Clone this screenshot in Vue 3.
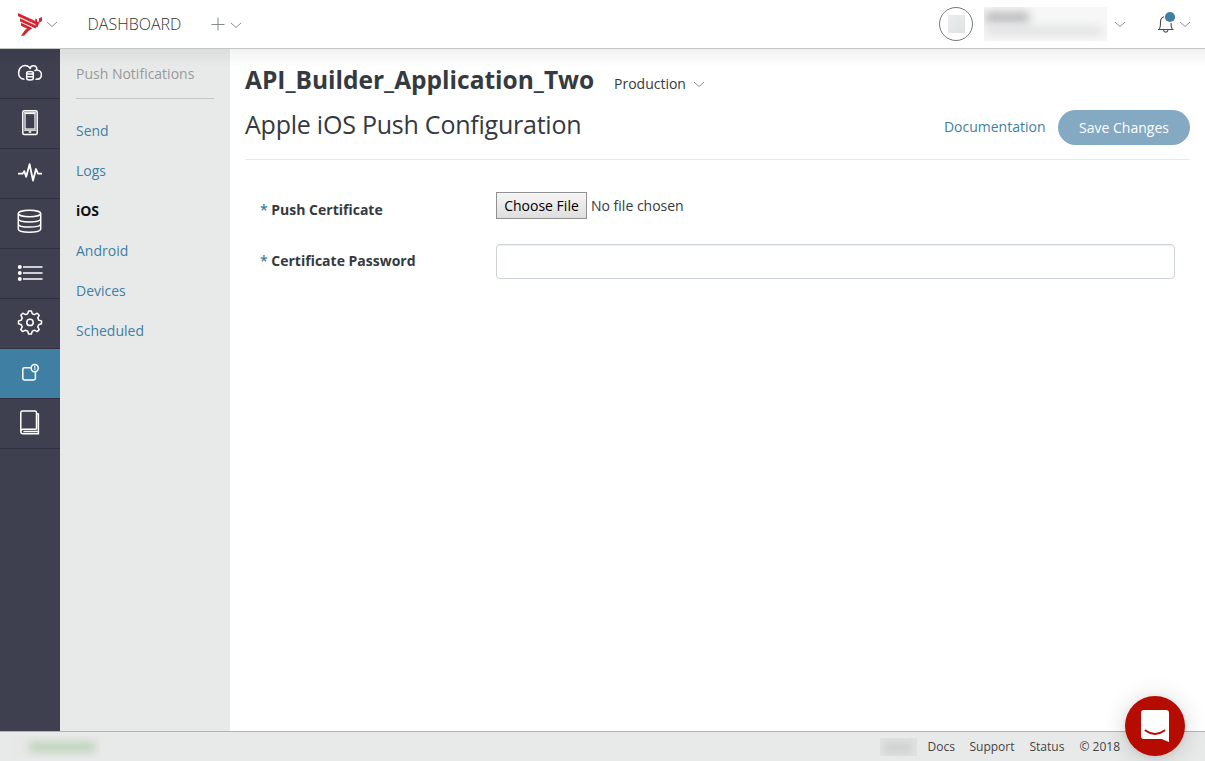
<script setup>
import { ref } from 'vue'

const rail = ['cloud', 'phone', 'pulse', 'database', 'list', 'gear', 'push', 'book']
const activeRail = 'push'
const links = ['Send', 'Logs', 'iOS', 'Android', 'Devices', 'Scheduled']
const activeLink = 'iOS'
const password = ref('')
</script>

<template>
  <div class="page">
    <header class="topbar">
      <svg class="logo" viewBox="0 0 26 24">
        <path d="M1 0 L18.300 8.100 V5.600 L20 6.300 V9.200 L22 8.200 V5.200 L25 4 V8.300 L22.200 9.600 L20.600 13.900 L17.500 13.500 L9.500 9.800 L18 12.200 L18.500 11.200 L1 3.200 Z" fill="#d8242f" />
        <path d="M3 4.900 L20 12.600 L18.500 15.600 L3 8.400 Z" fill="#d8242f" />
        <path d="M4 9.500 L15.500 15 L11.500 18 L7 22.800 L4 22.800 L8.200 16.700 L10.200 15.800 L4 12.800 Z" fill="#d8242f" />
        <path d="M1 4 L18.500 12.100 M3 8.900 L15.500 14.600" stroke="#fff" stroke-width=".7" fill="none" />
      </svg>
      <svg class="chev c1" viewBox="0 0 12 7"><path d="M1 1l5 4.500L11 1" /></svg>
      <span class="brand">DASHBOARD</span>
      <svg class="plus" viewBox="0 0 14 14"><path d="M7 .5v13M.5 7.500h13" /></svg>
      <svg class="chev c2" viewBox="0 0 12 7"><path d="M1 1l5 4.500L11 1" /></svg>
      <div class="avatar"><i></i></div>
      <div class="user"><i class="smear s1"></i><i class="smear s2"></i></div>
      <svg class="chev c3" viewBox="0 0 12 7"><path d="M1 1l5 4.500L11 1" /></svg>
      <svg class="bell" viewBox="0 0 18 22">
        <path d="M1 16.500h15.500M2.200 16c1.400-1.600 1.300-4 1.300-7 0-3 1.500-4.700 3.500-5.200M15.300 16c-1.300-1.500-1.300-3.500-1.300-6M6.500 17c.3 2.800 4.200 2.800 4.500 0" />
        <circle cx="13" cy="4" r="5.100" />
      </svg>
      <svg class="chev c4" viewBox="0 0 12 7"><path d="M1 1l5 4.500L11 1" /></svg>
    </header>

    <div class="body">
      <nav class="rail">
        <a v-for="name in rail" :key="name" class="rail-item" :class="{ active: name === activeRail }">
          <svg v-if="name === 'cloud'" viewBox="0 0 60 49">
            <path d="M24.500 30.700C21 30.700 18.600 28 18.600 24.500c0-4 2.600-7.500 6.400-7.500 2.600 0 4.400 1.300 5.600 3.300M29.800 20.500c.5-2.300 2.300-3.500 4.200-3.200 2 .3 3 2 2.700 4.200M34.500 22.500c1-1 2.500-1.300 3.800-.6 2 .7 3.200 2.500 3.100 4.500-.1 2.600-1.800 4.300-4.400 4.300h-1.500" />
            <path d="M26.700 24.500c0-2 6.600-2 6.600 0v5.500c0 2-6.600 2-6.600 0zM27 25.600h6M27 28.300h6" />
          </svg>
          <svg v-else-if="name === 'phone'" viewBox="0 0 60 49">
            <rect x="22.800" y="12.300" width="14.400" height="23.700" rx="1.500" />
            <rect x="25" y="15" width="10" height="15.500" stroke-width="1.200" />
            <path d="M24 13.800h12M24 31.800h12" stroke-width="1" /><path d="M28.700 33.500h2.600" stroke-width="1.600" />
          </svg>
          <svg v-else-if="name === 'pulse'" viewBox="0 0 60 49">
            <path d="M18 25.200h4.600l1.600-2.600 2 5.600 3.400-12.500L33 32l3-11.500 2 4.700h4" stroke-width="1.800" stroke-linejoin="round" />
          </svg>
          <svg v-else-if="name === 'database'" viewBox="0 0 60 49">
            <ellipse cx="29.500" cy="15" rx="11.200" ry="3.200" />
            <path d="M18.300 15v15.500c0 4.300 22.400 4.300 22.400 0V15M18.300 20.300c0 4.200 22.400 4.200 22.400 0M18.300 25.400c0 4.200 22.400 4.200 22.400 0" />
          </svg>
          <svg v-else-if="name === 'list'" viewBox="0 0 60 49">
            <path d="M23 18.500h19.500M23 24.500h19.500M23 30.500h19.500" stroke-width="1.600" />
            <g class="dots"><circle cx="19.800" cy="18.500" r="2" /><circle cx="19.800" cy="24.500" r="2" /><circle cx="19.800" cy="30.500" r="2" /></g>
          </svg>
          <svg v-else-if="name === 'gear'" viewBox="0 0 60 49">
            <path d="M27.700 15.200l.9-2.800h2.800l.9 2.800 2.200.9 2.700-1.400 2 2-1.400 2.700.9 2.200 2.800.9v2.800l-2.800.9-.9 2.200 1.400 2.700-2 2-2.700-1.400-2.200.9-.9 2.800h-2.800l-.9-2.800-2.200-.9-2.700 1.400-2-2 1.400-2.700-.9-2.200-2.800-.9v-2.800l2.800-.9.9-2.200-1.400-2.700 2-2 2.700 1.400z" stroke-linejoin="round" />
            <circle cx="30" cy="23.900" r="3.200" />
          </svg>
          <svg v-else-if="name === 'push'" viewBox="0 0 60 49">
            <path d="M30.800 19.200h-6.300q-1.700 0-1.700 1.700v8.800q0 1.700 1.700 1.700h9.200q1.700 0 1.700-1.700v-6.200" />
            <circle cx="34.700" cy="19.600" r="3.600" /><path d="M34 18.300l.9-.5v3.700" stroke-width="1" />
          </svg>
          <svg v-else viewBox="0 0 60 49">
            <path d="M36.500 30.700V14.300q0-1.700-1.700-1.700H22.500q-1.700 0-1.700 1.700v18.500M36.500 30.700H23.200c-3.200 0-3.200 4.500 0 4.500h15.200V15.500H37M23.500 33h14" />
          </svg>
        </a>
      </nav>

      <aside class="side">
        <div class="side-title">Push Notifications</div>
        <a v-for="l in links" :key="l" class="side-link" :class="{ current: l === activeLink }">{{ l }}</a>
      </aside>

      <main class="main">
        <div class="app-row">
          <h1>API_Builder_Application_Two</h1>
          <span class="env">Production</span>
          <svg class="chev" viewBox="0 0 12 7"><path d="M1 1l5 4.500L11 1" /></svg>
        </div>
        <div class="title-row">
          <h2>Apple iOS Push Configuration</h2>
          <a class="doc">Documentation</a>
          <button class="save">Save Changes</button>
        </div>
        <form class="form">
          <div class="field">
            <label><b>*</b> Push Certificate</label>
            <div class="file"><span class="choose">Choose File</span><span class="none">No file chosen</span></div>
          </div>
          <div class="field second">
            <label><b>*</b> Certificate Password</label>
            <input v-model="password" type="password" />
          </div>
        </form>
      </main>
      <div class="shade"></div>
    </div>

    <footer class="footer">
      <div class="status"><i></i></div>
      <div class="company"><i></i></div>
      <a class="f1">Docs</a><a class="f2">Support</a><a class="f3">Status</a><span class="f4">© 2018</span>
    </footer>

    <div class="chat">
      <svg viewBox="0 0 60 60">
        <path d="M19 14h22q3 0 3 3v29l-7.500-3H19q-3 0-3-3V17q0-3 3-3z" fill="#fff" />
        <path d="M20.500 34.500q9.500 7 19 0" fill="none" stroke="#b60c00" stroke-width="2" stroke-linecap="round" />
      </svg>
    </div>
  </div>
</template>

<style>
body { margin: 0; overflow: hidden; }
</style>

<style scoped>
* { box-sizing: border-box; }
.page { position: relative; width: 1205px; height: 761px; display: flex; flex-direction: column; background: #fff; color: #343a40; font-family: "Open Sans", sans-serif; font-size: 14px; line-height: 20px; overflow: hidden; }
.topbar { height: 49px; flex: none; border-bottom: 1px solid #c3c7c5; display: flex; align-items: center; }
.topbar > * { flex: none; }
.chev { width: 12px; height: 7px; fill: none; stroke: #8a8f92; stroke-width: 1; }
.logo { width: 26px; height: 24px; margin-left: 17px; margin-top: 1px; }
.c1 { margin-left: 3px; }
.brand { width: 94px; margin-left: 29.5px; margin-right: .5px; font-size: 16px; font-weight: 300; color: #333; white-space: nowrap; }
.plus { width: 14px; height: 14px; margin-left: 29px; fill: none; stroke: #858a8d; }
.c2 { margin-left: 5px; margin-top: 2px; }
.avatar { width: 34px; height: 34px; margin-left: 697px; border: 1px solid #77797b; border-radius: 50%; display: flex; align-items: center; justify-content: center; }
.avatar i { width: 17px; height: 18px; background: linear-gradient(135deg, #eceeed, #dce2e6); }
.user { width: 123px; height: 34px; margin-left: 11px; background: #f7f7f7; overflow: hidden; padding-top: 5px; }
.smear { display: block; filter: blur(5px); }
.s1 { width: 44px; height: 11px; margin-left: 1px; background: #b8b8bb; }
.s2 { width: 116px; height: 8px; margin: 4px 0 0 2px; background: #dddedf; }
.c3 { margin-left: 7px; }
.bell { width: 18px; height: 22px; margin-left: 31px; overflow: visible; fill: none; stroke: #4a4d52; stroke-width: 1.1; }
.bell circle { fill: #407fa4; stroke: none; }
.c4 { margin-left: 4px; }
.body { position: relative; height: 682px; flex: none; display: flex; }
.shade { position: absolute; left: 0; right: 0; top: 0; height: 18px; background: linear-gradient(rgba(0, 0, 0, .055), rgba(0, 0, 0, 0)); }
.rail { width: 60px; background: #3e4050; }
.rail-item { display: block; height: 50px; border-bottom: 1px solid #2e303e; }
.rail-item.active { background: #407fa4; }
.rail-item svg { display: block; width: 60px; height: 49px; fill: none; stroke: #fff; stroke-width: 1.5; transform: translateY(-.5px); }
.dots circle { fill: #fff; stroke: none; }
.side { width: 170px; padding: 0 16px; background: #e8eae9; }
.side-title { height: 50px; margin-bottom: 12px; padding-top: 15px; border-bottom: 1px solid #c3c7c5; color: #999; }
.side-link { display: block; height: 40px; line-height: 40px; color: #407fa4; }
.side-link.current { font-weight: 700; letter-spacing: -.1px; color: #111; }
.main { flex: 1; padding: 0 15px; }
.app-row { height: 61px; display: flex; align-items: flex-start; }
h1 { margin: 14px 0 0; width: 349px; font-size: 24.5px; line-height: 34px; font-weight: 700; white-space: nowrap; }
.env { margin: 25px 0 0 20px; width: 72px; }
.app-row .chev { margin: 32px 0 0 7px; }
.title-row { height: 50px; display: flex; align-items: flex-start; border-bottom: 1px solid #e8eae9; }
h2 { margin: -3px auto 0 0; font-size: 25px; line-height: 34px; letter-spacing: -.23px; font-weight: 380; white-space: nowrap; }
.doc { margin: 7px 12.500px 0 0; color: #407fa4; }
.save { width: 132px; height: 35px; border: 0; border-radius: 18px; background: #84a9c3; color: #fff; font: 500 14px "Open Sans", sans-serif; padding: 0; }
.form { padding: 32px 15px 0; }
.field { display: flex; height: 53px; }
label { width: 236px; font-weight: 700; padding-top: 8px; }
label b { color: #407fa4; font-weight: 600; }
.file { display: flex; }
.choose { height: 27px; width: 91px; border: 1px solid #919191; background: linear-gradient(#f6f6f6, #dedede); color: #000; text-align: center; line-height: 26px; }
.none { margin-left: 4px; line-height: 27px; }
.second { margin-top: -1px; }
.second label { padding-top: 7px; }
input { width: 679px; height: 35px; border: 1px solid #cdd1db; border-radius: 4px; box-shadow: inset 0 1px 1px rgba(0, 0, 0, .06); outline: 0; }
.footer { height: 30px; flex: none; border-top: 1px solid #afb5bb; background: #e8eae9; display: flex; align-items: center; font-size: 12px; color: #444; }
.status { width: 89px; height: 22px; margin-left: 11px; overflow: hidden; padding: 6px 0 0 18px; background: #e7e9e7; }
.status i { display: block; width: 66px; height: 10px; background: #bdd3bb; filter: blur(4px); }
.company { width: 37px; height: 18px; margin-left: 780px; background: #e1e2e2; overflow: hidden; padding: 5px 4px; }
.company i { display: block; width: 28px; height: 9px; background: #ccc; filter: blur(4px); }
.f1 { width: 27px; margin-left: 10.500px; }
.f2 { width: 46px; margin-left: 15px; }
.f3 { width: 35px; margin-left: 14px; }
.f4 { margin-left: 15px; white-space: nowrap; }
.chat { position: absolute; left: 1125px; top: 696px; width: 60px; height: 60px; border-radius: 50%; background: #b60c00; box-shadow: 0 1px 6px rgba(0, 0, 0, .08), 0 2px 24px rgba(0, 0, 0, .16); }
.chat svg { display: block; width: 60px; height: 60px; }
</style>
